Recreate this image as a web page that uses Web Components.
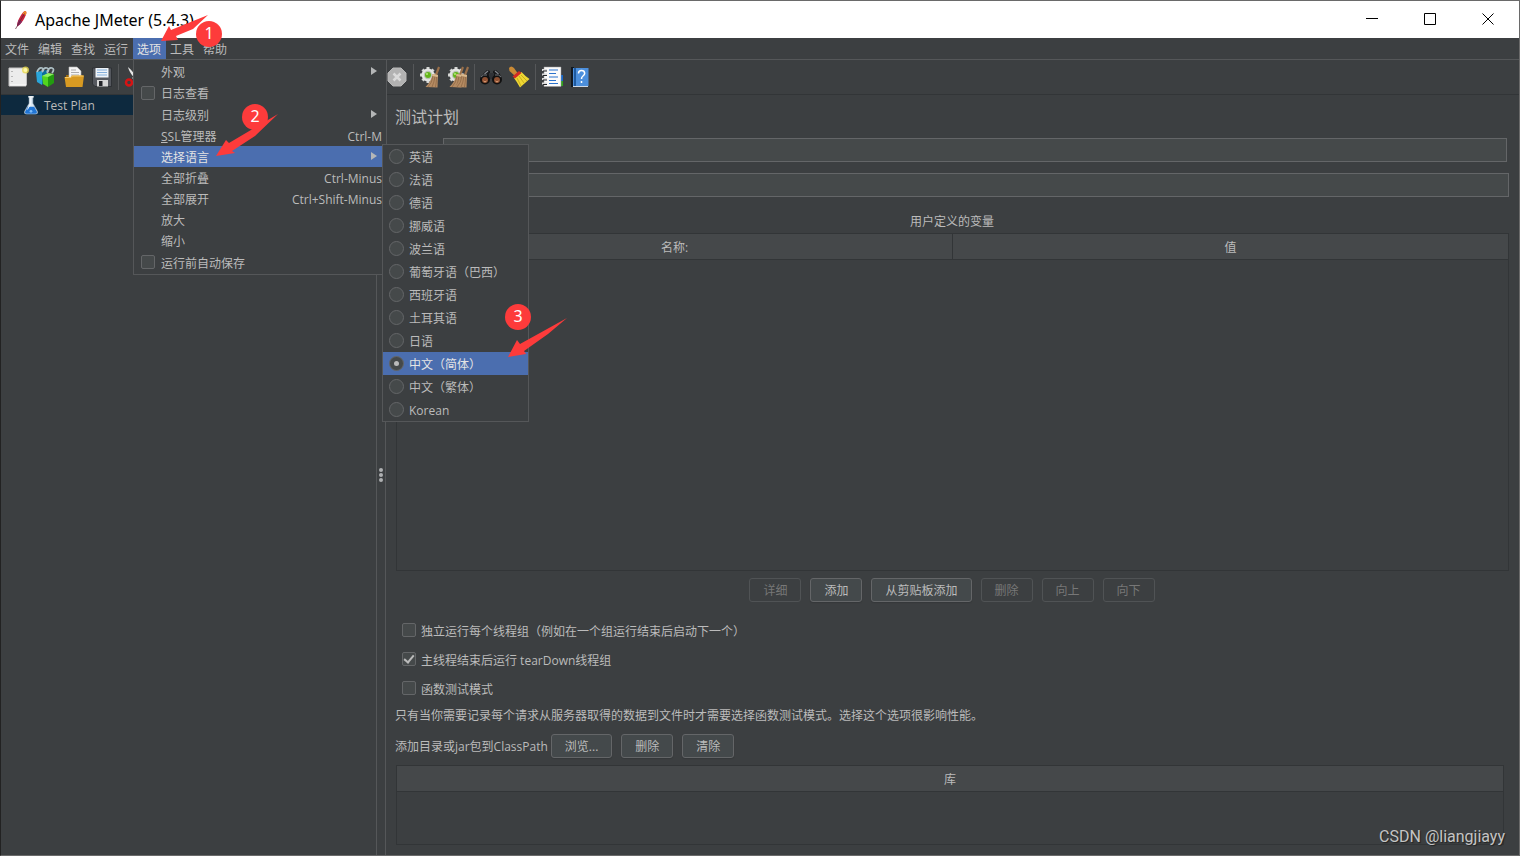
<!DOCTYPE html>
<html lang="zh-CN">
<head>
<meta charset="utf-8">
<title>Apache JMeter (5.4.3)</title>
<style>
  :root {
    --bg: #3c3f41; --field: #45494a; --head: #45484a; --line: #555759; --dark: #323537;
    --edge: #646668; --text: #bbbbbb; --hi: #4b6eaf; --mark: #fd3b3b;
  }
  html, body { margin: 0; height: 100%; }
  body { font: 12px/20px "Open Sans", "Noto Sans CJK SC", sans-serif; color: var(--text); background: var(--bg); overflow: hidden; }
</style>
</head>
<body>
<jmeter-window></jmeter-window>

<script>
class Base extends HTMLElement {
  constructor() {
    super();
    this.attachShadow({ mode: 'open' }).innerHTML =
      '<style>:host,*{box-sizing:border-box}' + this.constructor.css + '</style>' + this.view();
  }
  attr(n) { return this.getAttribute(n) || ''; }
}

/* ---------- toolbar pictures ---------- */
const gear = '<path stroke="#d4d6d4" stroke-width="3" d="M9 1v16M1 9h16M3.500 3.500l11 11M3.500 14.500l11-11"/><circle cx="9" cy="9" r="6.500" fill="#e4e5e4"/><circle cx="9" cy="9" r="4.200" fill="#b9c4b3"/><circle cx="9" cy="9" r="3" fill="#63b51b"/><circle cx="8" cy="8" r="1" fill="#b5ee7a"/>';
const sweep = (x) => `<g transform="translate(${x} 0)"><path d="M19 .500l2 1-3 8-2-1z" fill="#9a6f49"/><path d="M13.500 8l5.500 1-.5 12.500-12-.5q6-6 7-13z" fill="#b58b62"/><path d="M14 10q-1 7-5 11M16 10q-1 7-3 11M17.500 11q0 5-1 10" stroke="#8a6442" fill="none" stroke-width=".7"/><path d="M13.500 8l5.500 1-.3 2-5.500-1z" fill="#d9b98e"/></g>`;
const ICONS = {
  feather: '<path d="M18.500 2c1.800.7.600 4-1 7s-4.500 7-7.500 8.500c0-3.500 1.500-7.500 3.500-10.500s3.300-5.500 5-5z" fill="#c8243c"/><path d="M18.500 2c1.300.5 1 2.500.2 4.300l-3.200-1.500c1-1.600 2-3 3-2.800z" fill="#f08b2c"/><path d="M12 10.500l3.300 2c-1.400 2.200-3 4-5.300 5 .1-2.500.9-5 2-7z" fill="#8a2a60"/><path d="M17.500 4.500L8.500 20" stroke="#5c1c34" stroke-width=".7"/>',
  fresh: '<path d="M2 2h17v18H2z" fill="#ececec" stroke="#c4c4c4"/><path d="M3 19h16V3" fill="none" stroke="#fff"/><path d="M5 5v1m0 4v1m0 4v1" stroke="#a5a5a5" stroke-width="1.500"/><circle cx="18.500" cy="4" r="3.500" fill="#e9d94f" opacity=".8"/><circle cx="18.500" cy="4" r="2" fill="#fff8a8"/>',
  templates: '<path d="M1 6l6-1v14l-5-3z" fill="#29a5da"/><path d="M7 5l5-1v8l-5 7z" fill="#0c6d9e"/><path d="M7 10l6-2v13l-5-3z" fill="#52d51e"/><path d="M13 9l6-1v9l-6 4z" fill="#239b10"/><path d="M7 10l6-3 6 1-6 3z" fill="#8ff05f"/><path d="M2 6q2-5 5-4t0 4M7 5q2-4 5-3t0 5M12 6q2-5 5-4t0 5" fill="none" stroke="#aec0c6" stroke-width="1.800"/>',
  open: '<path d="M3 9h16v11H3z" fill="#9f6d10"/><path d="M6 1h8l4 4v8H6z" fill="#f5f5f5" stroke="#b8b8b8" stroke-width=".6"/><path d="M8 4h5M8 6.500h8M8 9h8" stroke="#999" stroke-width=".8"/><path d="M1.500 11h6l1.500-1.500h12L19.500 21H3z" fill="#d89a22"/><path d="M2 11.500h6l1.500-1.500h11" stroke="#f6ca68" fill="none"/>',
  save: '<path d="M1.500 2h19v18.500H4L1.500 18z" fill="#55585e" stroke="#2a2c30" stroke-width=".8"/><path d="M4.500 2h13v9.500h-13z" fill="#eef3f8"/><path d="M6 4h10M6 6.500h10M6 9h10" stroke="#84aedb"/><path d="M6 14h11v6.500H6z" fill="#d6d6d6"/><path d="M8 15h3.500v5H8z" fill="#23252a"/>',
  cut: '<path d="M4 1c1 5 5 9 8 13l2-2C10 8 8 4 4 1z" fill="#e8e8e8"/><path d="M19 1c-3 4-7 9-9 13l-2-2c4-4 7-8 11-11z" fill="#bbb"/><g fill="none" stroke="#d61414" stroke-width="2.500"><circle cx="5" cy="16.500" r="3"/><circle cx="16" cy="16.500" r="3"/></g>',
  stop: '<path d="M7 2h8l5 5v8l-5 5H7l-5-5V7z" fill="#b2b2b2" stroke="#b8b8b8"/><path d="M7.500 7.500l7 7m0-7l-7 7" stroke="#dadada" stroke-width="2.500"/>',
  clear: gear + sweep(0),
  clearall: gear + sweep(-4) + sweep(1),
  find: '<path d="M3 8l4-4 3 1v9H2zM20 8l-4-4-3 1v9h8z" fill="#18191b"/><path d="M9 7h5v6H9z" fill="#303236"/><path d="M4.500 8L8 5M18.500 8L15 5" stroke="#85898f" stroke-width="1.200"/><circle cx="5" cy="13.500" r="5" fill="#111"/><circle cx="17" cy="13.500" r="5" fill="#111"/><circle cx="5" cy="14" r="3" fill="#8d4f31"/><circle cx="17" cy="14" r="3" fill="#8d4f31"/><path d="M3.500 15q1.500 2 3 0M15.500 15q1.500 2 3 0" stroke="#dfa37b" fill="none"/><path d="M1 11q2-3 6-2M15 9q4-1 6 2" stroke="#71757b" fill="none"/>',
  broom: '<path d="M1 2q2-3 5 0l3.500 5-3 2.500L1.500 5z" fill="#c98a35"/><path d="M6 12l7.500-6Q17 10 21.500 13L12 21.500Q9 16 6 12z" fill="#eed733"/><path d="M9 12l4 8M11 10l5 7M13 9l6 6" stroke="#b99b12" stroke-width=".7"/><path d="M4.500 10.500L11 5l2.500 2L7 12.500z" fill="#d42b22"/>',
  log: '<path d="M15 9h7v6h-7z" fill="#1768cc"/><path d="M15 15h7v5h-7z" fill="#31a11e"/><path d="M3 1h17v19.500H3z" fill="#fafafa" stroke="#999" stroke-width=".5"/><path d="M8 4h9M8 7.500h7M8 11h9M8 14.500h7M8 17.500h9" stroke="#2b72cc" stroke-width="1.200"/><path d="M1 4h5M1 8.500h5M1 13h5M1 17.500h5" stroke="#ddd" stroke-width="2"/><path d="M2 5h4M2 9.500h4M2 14h4M2 18.500h4" stroke="#24272a" stroke-width="1.200"/>',
  help: '<path d="M2 1h3v20H2z" fill="#111821"/><path d="M4 2h15.500v18H4z" fill="#4c8fdc"/><path d="M5 2h2v18H5z" fill="#1e5aa0"/><path d="M9.500 7.500q0-3 3-3t3.200 2.800q0 1.500-1.700 2.700T12.500 13M12.500 15v2" fill="none" stroke="#fff" stroke-width="1.500"/><path d="M4 20.500h15" stroke="#cfd9e6"/>',
  flask: '<path d="M9 2h4v7l5 9q1 3-2 3H6q-3 0-2-3l5-9z" fill="#dbe8f2" stroke="#9fb2c3" stroke-width=".7"/><path d="M7.500 13h7l3 5.500q.6 2-1.500 2H6q-2.200 0-1.500-2z" fill="#2175d4"/><path d="M8 2h6" stroke="#fff" stroke-width="1.500"/><path d="M10 3v8l-3 5" stroke="#fff" fill="none"/><circle cx="11" cy="18" r="1.500" fill="#7cbcfa"/>'
};
customElements.define('jm-icon', class extends Base {
  static css = ':host{display:block;width:22px;height:22px;flex:none}svg{display:block;width:100%;height:100%}';
  view() { return `<svg viewBox="0 0 22 22" aria-hidden="true">${ICONS[this.attr('name')]}</svg>`; }
});

customElements.define('title-bar', class extends Base {
  static css = `:host{display:flex;align-items:center;height:37px;background:#fff;color:#000;font-family:"Noto Sans",sans-serif;font-size:16px;padding:0 2px 0 6px;flex:none}
    span{flex:1;padding-left:6px}button{width:58px;height:37px;border:0;padding:0 0 2px;background:none;display:grid;place-items:center}
    jm-icon{width:22px;height:22px}
    svg{width:12px;height:12px}`;
  view() {
    const b = (n, d) => `<button type="button" aria-label="${n}"><svg viewBox="0 0 12 12" fill="none" stroke="#000"><path d="${d}"/></svg></button>`;
    return '<jm-icon name="feather"></jm-icon><span><slot></slot></span>' +
      b('最小化', 'M0 5.500h12') + b('最大化', 'M.5.5h11v11H.5z') + b('关闭', 'M.5.5l11 11m0-11l-11 11');
  }
});

customElements.define('menu-bar', class extends Base {
  static css = `:host{display:flex;height:22px;border-bottom:1px solid var(--line);flex:none}
    button{font:inherit;color:inherit;background:none;border:0;width:33px;padding:2px 5px 0 4px;height:21px;line-height:19px;white-space:nowrap}
    button.on{background:var(--hi);color:#e4e4e4}`;
  view() {
    return ['文件', '编辑', '查找', '运行', '选项', '工具', '帮助']
      .map(t => `<button type="button"${t === '选项' ? ' class="on" aria-expanded="true"' : ''}>${t}</button>`).join('');
  }
});

customElements.define('tool-bar', class extends Base {
  static css = `:host{display:flex;align-items:center;height:35px;border-bottom:1px solid var(--dark);padding-left:3px;flex:none}
    button{width:28px;height:28px;padding:3px;border:0;background:none;flex:none}
    i{width:1px;height:26px;margin:0 2px;background:var(--line);flex:none}
    div{width:234px;flex:none}`;
  view() {
    const b = (n, t) => `<button type="button" aria-label="${t}"><jm-icon name="${n}"></jm-icon></button>`;
    return b('fresh', '新建') + b('templates', '模板') + b('open', '打开') + b('save', '保存') + '<i></i>' + b('cut', '剪切') +
      '<div></div>' + b('stop', '关闭') + '<i></i>' + b('clear', '清除') + b('clearall', '清除全部') + '<i></i>' +
      b('find', '查找') + b('broom', '重置搜索') + '<i></i>' + b('log', '函数助手') + b('help', '帮助');
  }
});

customElements.define('test-tree', class extends Base {
  static css = `:host{display:block;width:375px;flex:none}
    a{display:flex;align-items:center;height:20px;line-height:22px;background:#0d293e;color:inherit;text-decoration:none;padding-left:20px;gap:3px}
    jm-icon{width:20px;height:20px}span{padding-top:2px}`;
  view() { return '<a href="#plan"><jm-icon name="flask"></jm-icon><span><slot></slot></span></a>'; }
});

customElements.define('split-handle', class extends Base {
  static css = `:host{display:flex;flex-direction:column;align-items:center;justify-content:center;gap:1px;width:10px;flex:none;
      border:solid var(--line);border-width:0 1px}
    i{width:4px;height:4px;border-radius:2px;background:#aeb0b1}`;
  view() { return '<i></i><i></i><i></i>'; }
});

customElements.define('push-button', class extends Base {
  static css = `:host{display:block}
    button{display:block;font:inherit;color:inherit;height:24px;line-height:20px;padding:2px 13px 0;white-space:nowrap;
      border:1px solid var(--edge);border-radius:3px;background:#44494b;box-shadow:0 1px 1px #35383a}
    button:disabled{color:#777;border-color:#505355;background:none;box-shadow:none}`;
  view() { return `<button type="button"${this.hasAttribute('disabled') ? ' disabled' : ''}><slot></slot></button>`; }
});

const tick = `input{appearance:none;margin:0;width:14px;height:14px;flex:none;border:1px solid var(--edge);background:var(--field);border-radius:2px;display:grid;place-items:center}
  input:checked::after{content:"";width:4px;height:8px;border:solid #bbb;border-width:0 2px 2px 0;transform:rotate(40deg);margin-bottom:3px}`;
customElements.define('check-line', class extends Base {
  static css = `:host{display:block}label{display:flex;align-items:center;height:29px;gap:5px;padding-left:7px}label span{padding-top:2px}${tick}input{margin-bottom:2px}`;
  view() { return `<label><input type="checkbox"${this.hasAttribute('checked') ? ' checked' : ''}><span><slot></slot></span></label>`; }
});

customElements.define('data-table', class extends Base {
  static css = `:host{display:block;border:1px solid var(--dark)}
    table{width:100%;border-collapse:collapse;table-layout:fixed}
    th{font-weight:normal;line-height:22px;padding:3px 0 0;background:var(--head);border-bottom:1px solid var(--dark)}
    th+th{border-left:1px solid var(--dark)}`;
  view() {
    return `<table><thead><tr>${this.attr('columns').split('|').map(c => `<th scope="col">${c}</th>`).join('')}</tr></thead><tbody></tbody></table>`;
  }
});

customElements.define('test-plan', class extends Base {
  static css = `:host{display:flex;flex-direction:column;flex:1;min-width:0;padding:11px 10px 10px 9px}
    h1{font-size:16px;line-height:22px;font-weight:normal;margin:0 0 10px}
    input{display:block;height:24px;margin:0 0 11px 48px;border:1px solid var(--edge);background:var(--field);color:inherit;font:inherit;border-radius:0}
    h1+input{margin-right:2px}
    h2{font-size:12px;line-height:22px;padding-top:2px;font-weight:normal;text-align:center;margin:1px 0 0}
    data-table{margin-left:1px}
    .vars{flex:1;min-height:80px}
    .lib{height:80px;margin-right:5px}
    .row{display:flex;gap:9px;margin:7px 0;align-items:center}
    .mid{justify-content:center;margin-bottom:14px}
    .row span{margin-right:-6px;padding-top:2px}
    p{margin:0;padding-top:2px;line-height:22px}`;
  view() {
    return `<h1>测试计划</h1>
    <input type="text" aria-label="名称"><input type="text" aria-label="注释">
    <h2>用户定义的变量</h2>
    <data-table class="vars" columns="名称:|值"></data-table>
    <div class="row mid"><push-button disabled>详细</push-button><push-button>添加</push-button><push-button>从剪贴板添加</push-button><push-button disabled>删除</push-button><push-button disabled>向上</push-button><push-button disabled>向下</push-button></div>
    <check-line>独立运行每个线程组（例如在一个组运行结束后启动下一个）</check-line>
    <check-line checked>主线程结束后运行 tearDown线程组</check-line>
    <check-line>函数测试模式</check-line>
    <p>只有当你需要记录每个请求从服务器取得的数据到文件时才需要选择函数测试模式。选择这个选项很影响性能。</p>
    <div class="row"><span>添加目录或jar包到ClassPath</span><push-button>浏览...</push-button><push-button>删除</push-button><push-button>清除</push-button></div>
    <data-table class="lib" columns="库"></data-table>`;
  }
});

customElements.define('options-menu', class extends Base {
  static css = `:host{display:block;width:254px;background:var(--bg);border:1px solid var(--line);padding-top:1px}
    button,label{display:flex;align-items:center;width:100%;height:21px;font:inherit;line-height:20px;color:inherit;background:none;border:0;padding:2px 4px 0 27px;text-align:left}
    label{height:22px;padding:0 0 0 7px;gap:6px}
    label:last-child{height:23px}
    label span{padding-top:2px}
    label input{margin-bottom:1px}
    button span{flex:1}
    button.on{background:var(--hi);color:#e4e4e4}
    .more::after{content:"";border:solid transparent;border-width:4px 0 4px 6px;border-left-color:#b4b6b7;margin:0 5px 3px 0}
    ${tick}`;
  view() {
    const b = (t, k = '', c = '') => `<button type="button" class="${c}"><span>${t}</span>${k}</button>`;
    const c = t => `<label><input type="checkbox"><span>${t}</span></label>`;
    return b('外观', '', 'more') + c('日志查看') + b('日志级别', '', 'more') + b('<u>S</u>SL管理器', 'Ctrl-M') +
      b('选择语言', '', 'more on') + b('全部折叠', 'Ctrl-Minus') + b('全部展开', 'Ctrl+Shift-Minus') + b('放大') + b('缩小') + c('运行前自动保存');
  }
});

customElements.define('language-menu', class extends Base {
  static css = `:host{display:block;width:147px;background:var(--bg);border:1px solid var(--line)}
    label{display:flex;align-items:center;height:23px;padding-left:6px;gap:5px}
    label span{padding-top:2px}
    label:has(:checked){background:var(--hi);color:#e4e4e4}
    input{appearance:none;margin:0;width:15px;height:15px;border:1px solid var(--edge);border-radius:50%;background:var(--field);display:grid;place-items:center}
    input:checked::after{content:"";width:5px;height:5px;border-radius:50%;background:#bbb}`;
  view() {
    return ['英语', '法语', '德语', '挪威语', '波兰语', '葡萄牙语（巴西）', '西班牙语', '土耳其语', '日语', '中文（简体）', '中文（繁体）', 'Korean']
      .map(t => `<label><input type="radio" name="lang"${t === '中文（简体）' ? ' checked' : ''}><span>${t}</span></label>`).join('');
  }
});

/* numbered step: a red disc beside a tapered arrow */
customElements.define('step-mark', class extends Base {
  static css = `:host{position:absolute;display:block;pointer-events:none}
    svg{display:block;overflow:visible}
    b{position:absolute;width:26px;height:26px;border-radius:50%;background:var(--mark);color:#fff;font:16px/24px "Noto Sans",sans-serif;text-align:center}`;
  view() {
    const s = { 1: ['0,27 8,12 10,16 47,1 32,15 15,22 17,26', 35, 7], 2: ['0,42 10,26 13,29 62,0 39,22 16,37 19,39', 26, -10], 3: ['0,40 9,23 12,27 59,1 40,17 16,34 18,37', -3, -13] }[this.attr('n')];
    return `<svg width="62" height="42" fill="#fd3b3b"><polygon points="${s[0]}"/></svg><b style="left:${s[1]}px;top:${s[2]}px">${this.attr('n')}</b>`;
  }
});

customElements.define('jmeter-window', class extends Base {
  static css = `:host{display:flex;flex-direction:column;position:relative;height:100vh;border:1px solid #6a6a6a;border-left-color:#222;background:var(--bg)}
    main{display:flex;flex:1;min-height:0}
    options-menu{position:absolute;left:132px;top:58px}
    language-menu{position:absolute;left:381px;top:143px}
    .s1{left:160px;top:13px}.s2{left:215px;top:113px}.s3{left:507px;top:316px}
    footer{position:absolute;right:14px;bottom:8px;font:16px/20px Roboto,"Liberation Sans",sans-serif;color:#c4c4c4;text-shadow:1px 1px 1px #222}`;
  view() {
    return `<title-bar>Apache JMeter (5.4.3)</title-bar><menu-bar></menu-bar><tool-bar></tool-bar>
    <main><test-tree>Test Plan</test-tree><split-handle></split-handle><test-plan></test-plan></main>
    <options-menu></options-menu><language-menu></language-menu>
    <step-mark class="s1" n="1"></step-mark><step-mark class="s2" n="2"></step-mark><step-mark class="s3" n="3"></step-mark>
    <footer>CSDN @liangjiayy</footer>`;
  }
});
</script>
</body>
</html>
